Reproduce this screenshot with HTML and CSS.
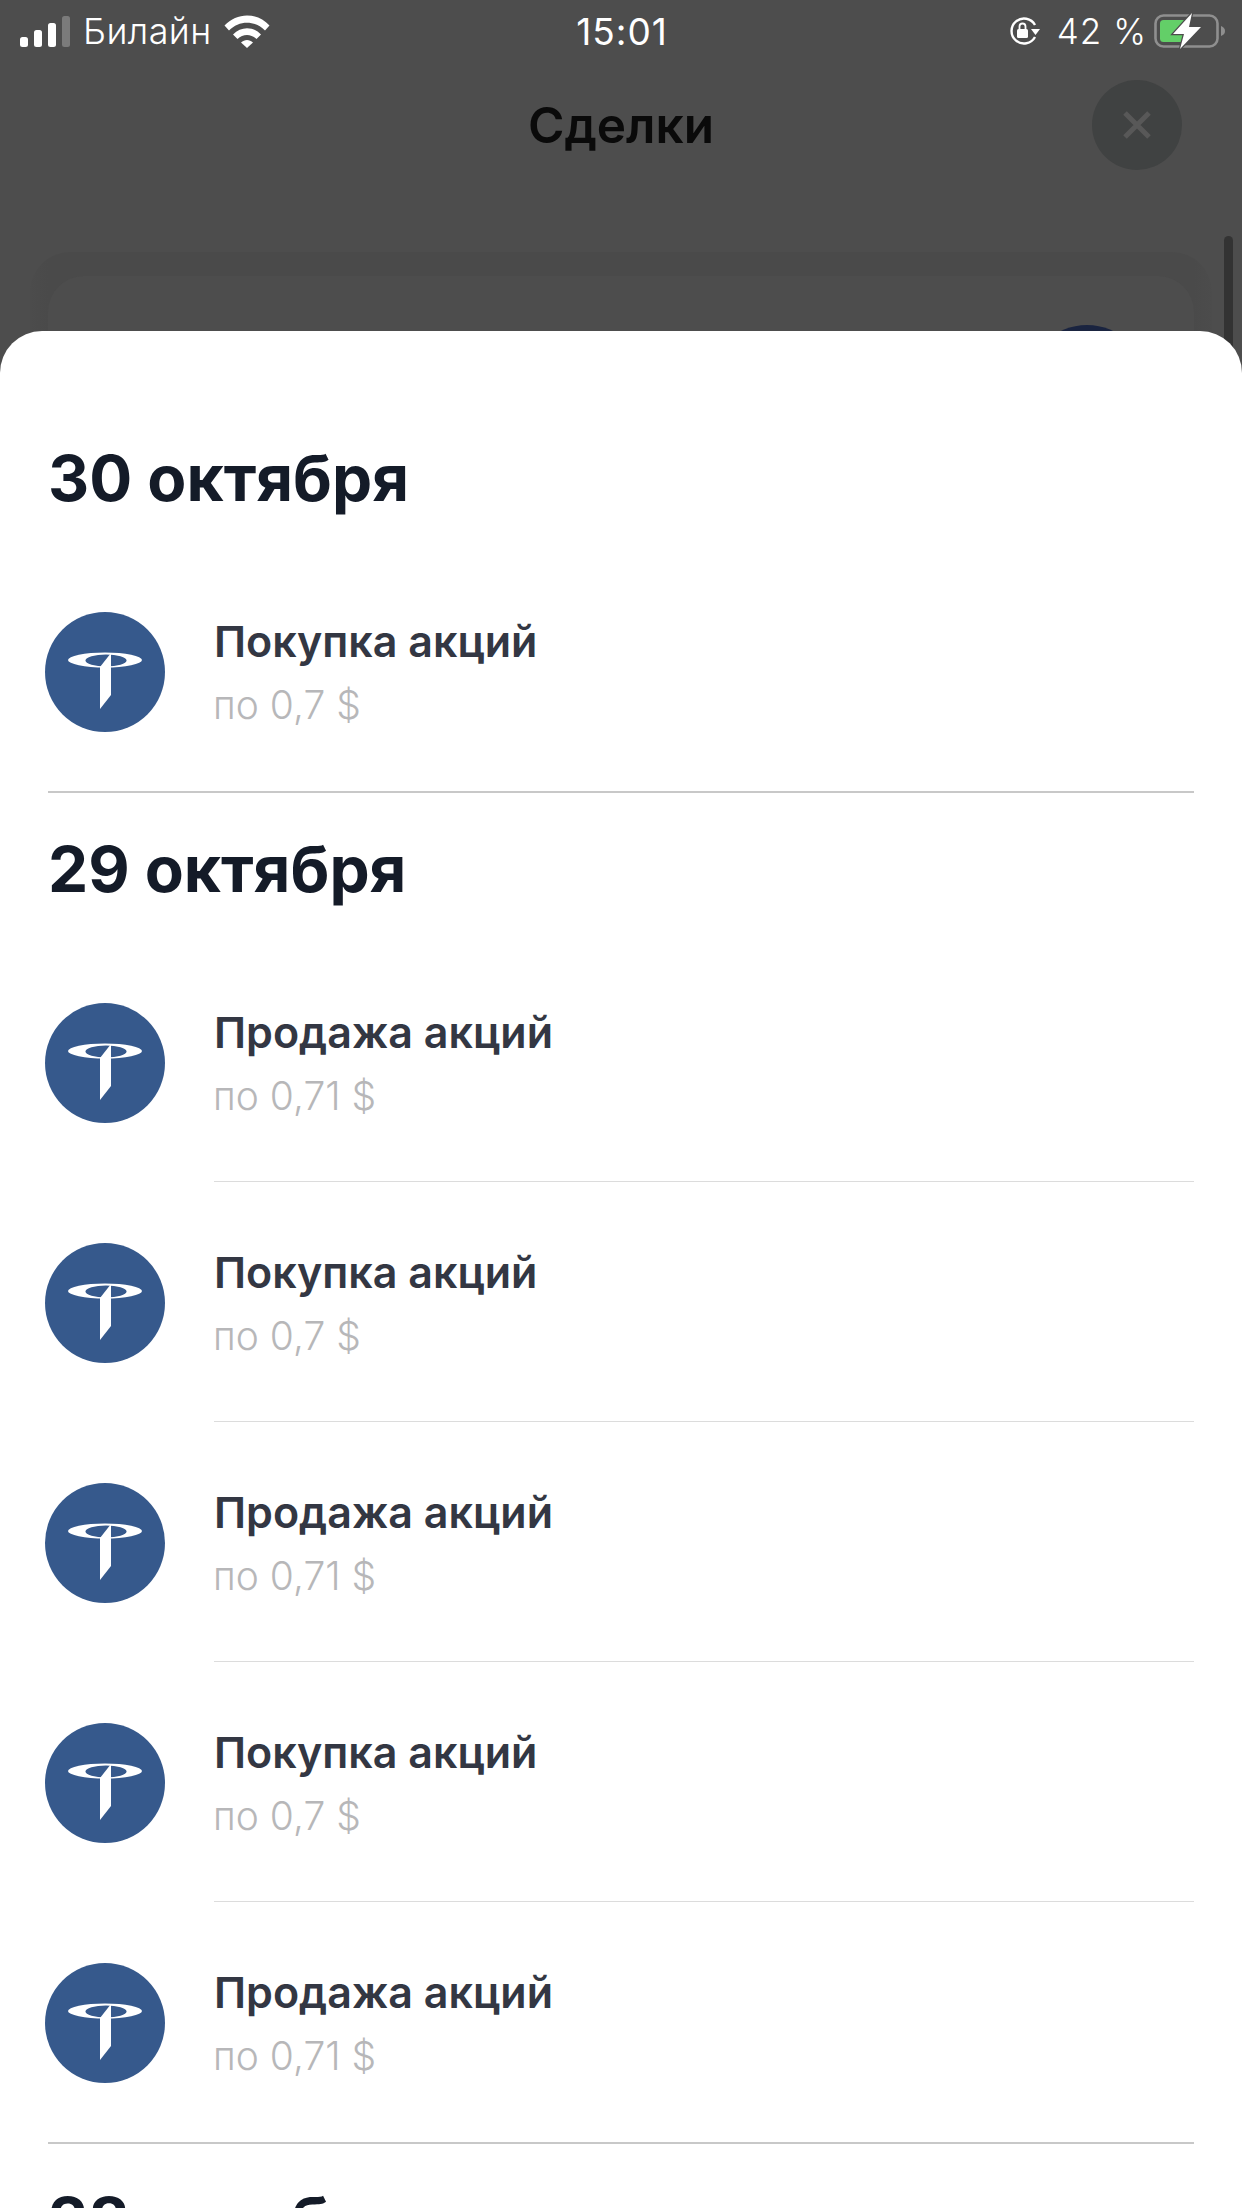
FILE: index.html
```html
<!DOCTYPE html>
<html lang="ru">
<head>
    <meta charset="UTF-8">
    <meta name="viewport" content="width=device-width, initial-scale=1.0">
    <title>Сделки</title>
    <link rel="stylesheet" href="styles.css">
</head>
<body>
    <svg class="defs" width="0" height="0">
        <symbol id="logo" viewBox="0 0 120 120">
            <circle cx="60" cy="60" r="60" fill="#36598c"/>
            <ellipse cx="60" cy="48" rx="37" ry="7.5" fill="#fff"/>
            <ellipse cx="61" cy="48.5" rx="20.5" ry="6" fill="#36598c"/>
            <polygon points="66,41 55,55 55,97 66,83" fill="#fff"/>
        </symbol>
    </svg>

    <div class="back">
        <div class="status">
            <div class="status-left">
                <svg class="signal" width="50" height="31" viewBox="0 0 50 31">
                    <rect x="0" y="21" width="8" height="10" rx="2.5" fill="#fff"/>
                    <rect x="14" y="14" width="8" height="17" rx="2.5" fill="#fff"/>
                    <rect x="28" y="7" width="8" height="24" rx="2.5" fill="#fff"/>
                    <rect x="42" y="0" width="8" height="31" rx="2.5" fill="#7b7b7b"/>
                </svg>
                <span class="carrier">Билайн</span>
                <svg class="wifi" width="46" height="33" viewBox="0 0 46 33">
                    <path d="M0.5 10.5 C13 -3 33 -3 45.5 10.5 L41 15.5 C31 5 15 5 5 15.5 Z" fill="#fff"/>
                    <path d="M9 19.5 C17 11 29 11 37 19.5 L32.5 24 C27 18.5 19 18.5 13.5 24 Z" fill="#fff"/>
                    <path d="M17 27.5 C20.5 24 25.5 24 29 27.5 L23 33 Z" fill="#fff"/>
                </svg>
            </div>
            <div class="time">15:01</div>
            <div class="status-right">
                <svg class="lock" width="32" height="28" viewBox="0 0 32 28">
                    <path d="M27 8 A12.5 12.5 0 1 0 27 20" fill="none" stroke="#fff" stroke-width="2.4"/>
                    <rect x="9" y="12" width="11" height="9" rx="1.5" fill="#fff"/>
                    <path d="M11.5 12 V9.5 a3 3 0 0 1 6 0 V12" fill="none" stroke="#fff" stroke-width="1.8"/>
                    <polygon points="23,12 32,12 27.5,18" fill="#fff"/>
                </svg>
                <span class="percent">42 %</span>
                <svg class="battery" width="72" height="36" viewBox="0 0 72 36">
                    <rect x="1.5" y="2.5" width="62" height="31" rx="8" fill="none" stroke="#8f8f8f" stroke-width="2.6"/>
                    <rect x="6" y="7" width="26" height="22" rx="3.5" fill="#63cf68"/>
                    <path d="M67 13 c3 1 4 3 4 5 s-1 4 -4 5 Z" fill="#8f8f8f"/>
                    <polygon points="38,0 19,21 30,21 26,36 47,14 35,14" fill="#fff" stroke="#4d4d4d" stroke-width="2.5" paint-order="stroke"/>
                </svg>
            </div>
        </div>
        <div class="topbar">
            <span></span>
            <h2 class="topbar-title">Сделки</h2>
            <div class="close">
                <svg width="30" height="30" viewBox="0 0 30 30">
                    <path d="M3 3 L27 27 M27 3 L3 27" stroke="#585858" stroke-width="5"/>
                </svg>
            </div>
        </div>
        <div class="card-shade">
            <div class="card">
                <div class="card-logo"></div>
            </div>
        </div>
        <div class="scrollbar"></div>
    </div>

    <div class="sheet">
        <section class="group">
            <h1 class="date">30 октября</h1>
            <div class="row">
                <svg class="logo"><use href="#logo"/></svg>
                <div class="row-body">
                    <div class="row-title">Покупка акций</div>
                    <div class="row-sub">по 0,7 $</div>
                </div>
            </div>
        </section>
        <section class="group">
            <h1 class="date">29 октября</h1>
            <div class="row">
                <svg class="logo"><use href="#logo"/></svg>
                <div class="row-body">
                    <div class="row-title">Продажа акций</div>
                    <div class="row-sub">по 0,71 $</div>
                </div>
            </div>
            <div class="row">
                <svg class="logo"><use href="#logo"/></svg>
                <div class="row-body">
                    <div class="row-title">Покупка акций</div>
                    <div class="row-sub">по 0,7 $</div>
                </div>
            </div>
            <div class="row">
                <svg class="logo"><use href="#logo"/></svg>
                <div class="row-body">
                    <div class="row-title">Продажа акций</div>
                    <div class="row-sub">по 0,71 $</div>
                </div>
            </div>
            <div class="row">
                <svg class="logo"><use href="#logo"/></svg>
                <div class="row-body">
                    <div class="row-title">Покупка акций</div>
                    <div class="row-sub">по 0,7 $</div>
                </div>
            </div>
            <div class="row">
                <svg class="logo"><use href="#logo"/></svg>
                <div class="row-body">
                    <div class="row-title">Продажа акций</div>
                    <div class="row-sub">по 0,71 $</div>
                </div>
            </div>
        </section>
        <section class="group">
            <h1 class="date">28 октября</h1>
        </section>
    </div>
</body>
</html>
```

FILE: styles.css
```css
*{
    margin: 0;
    padding: 0;
    box-sizing: border-box;
}
html, body{
    width: 1242px;
    height: 2208px;
    overflow: hidden;
}
body{
    position: relative;
    background-color: #4d4d4d;
    font-family: Inter, "Noto Sans", sans-serif;
}
.defs{
    position: absolute;
}

/* dimmed page behind the sheet */
.status{
    display: grid;
    grid-template-columns: 1fr auto 1fr;
    align-items: center;
    height: 62px;
    padding: 0 16px 0 20px;
    color: #fff;
    font-size: 35px;
}
.status-left{
    display: flex;
    align-items: center;
}
.signal{
    margin-right: 13px;
}
.carrier{
    margin-right: 12px;
    font-size: 36px;
    font-weight: 300;
    letter-spacing: 0.4px;
}
.time{
    margin-left: -2px;
    font-size: 37px;
    font-weight: 400;
    letter-spacing: 1px;
}
.status-right{
    display: flex;
    align-items: center;
    justify-content: flex-end;
}
.percent{
    margin: 0 7px 0 17px;
    font-weight: 300;
    letter-spacing: 1px;
    white-space: nowrap;
}
.topbar{
    display: grid;
    grid-template-columns: 1fr auto 1fr;
    align-items: center;
    margin-top: 18px;
}
.topbar-title{
    color: #0a0a0a;
    font-size: 49.5px;
    font-weight: 600;
}
.close{
    display: flex;
    align-items: center;
    justify-content: center;
    justify-self: end;
    width: 90px;
    height: 90px;
    margin-right: 60px;
    border-radius: 50%;
    background-color: #404242;
}
.card-shade{
    margin: 82px 30px 0;
    padding: 24px 18px 0;
    height: 200px;
    background: linear-gradient(90deg, #4c4c4c 0, #4a4a4a 18px, #4a4a4a calc(100% - 18px), #4c4c4c 100%);
    border-radius: 40px 40px 0 0;
}
.card{
    display: flex;
    justify-content: flex-end;
    height: 176px;
    padding: 49px 47px 0 0;
    border-radius: 36px 36px 0 0;
    background-color: #4d4d4d;
}
.card-logo{
    width: 120px;
    height: 120px;
    border-radius: 50%;
    background-color: #1a2440;
}
.scrollbar{
    position: absolute;
    top: 236px;
    left: 1224px;
    width: 9px;
    height: 140px;
    border-radius: 5px;
    background-color: #333;
}

/* white sheet */
.sheet{
    position: absolute;
    top: 331px;
    left: 0;
    width: 1242px;
    height: 1877px;
    overflow: hidden;
    padding: 71px 48px 0;
    border-radius: 42px 42px 0 0;
    background-color: #fff;
}
.group{
    border-bottom: 2px solid #c8c8c8;
}
.group:last-child{
    border-bottom: none;
}
.date{
    height: 149px;
    padding-top: 37px;
    color: #141b28;
    font-size: 63.8px;
    font-weight: 700;
    line-height: 78px;
    white-space: nowrap;
}
.row{
    display: flex;
    align-items: center;
}
.logo{
    flex: none;
    width: 120px;
    height: 120px;
    margin-top: 2px;
    margin-left: -3px;
    margin-right: 49px;
}
.row-body{
    flex: 1;
    display: flex;
    flex-direction: column;
    justify-content: center;
    height: 240px;
    padding-top: 4px;
    border-bottom: 1px solid #dcdcdc;
}
.row:last-child .row-body{
    border-bottom: none;
}
.row-title{
    color: #333743;
    font-size: 43px;
    font-weight: 600;
    line-height: 50px;
}
.row-sub{
    margin-top: 14px;
    margin-left: -1px;
    color: #b7b7b9;
    font-size: 39px;
    font-weight: 300;
    line-height: 50px;
}
```
